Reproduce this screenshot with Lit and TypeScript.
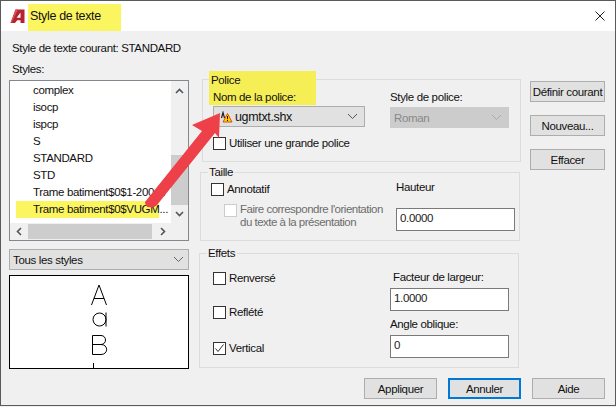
import { LitElement, html, css, svg } from "lit";
import { customElement } from "lit/decorators.js";

const chev = (c: string) => html`<svg class="chev" width="11" height="7" viewBox="0 0 11 7"><path d="M1 1l4.500 4.500L10 1" fill="none" stroke="${c}" stroke-width="1"/></svg>`;

@customElement("app-root")
export class AppRoot extends LitElement {
  static styles = css`
    :host { display: block; width: 616px; height: 407px; overflow: hidden; background: #f0f0f0;
      font-family: "Liberation Sans", Arial, sans-serif; font-size: 11.5px; letter-spacing: -.35px; color: #111; line-height: 14px; }
    * { box-sizing: border-box; }
    .win { position: relative; width: 616px; height: 406px; border: 1px solid #5a5a5a; display: flex; flex-direction: column; }
    .title { height: 30px; background: #fff; display: flex; align-items: stretch; padding-left: 9px; flex: none; }
    .logo { margin-top: 7px; flex: none; }
    .ttl { margin: 3px 0 0 3px; width: 93px; height: 27px; background: #fbf55f; font-size: 12.5px; line-height: 25px; padding-left: 2px; color: #111; }
    .close { margin: 10px 10px 0 auto; }
    .main { flex: 1; display: grid; grid-template-columns: 180px 341px 75px; padding-left: 8px; }
    .left { display: flex; flex-direction: column; padding-top: 10px; }
    .cur { height: 14px; padding-left: 3px; white-space: nowrap; }
    .lab { height: 14px; margin-top: 7px; padding-left: 3px; }
    .list { margin-top: 4px; width: 180px; height: 161px; background: #fff; border: 1px solid #828790; display: grid;
      grid-template-columns: 1fr 17px; grid-template-rows: 1fr 17px; }
    .items { padding: 1px 0 0 6px; }
    .it { height: 17px; line-height: 17px; padding-left: 17px; white-space: nowrap; width: 155px; }
    .it.sel { background: linear-gradient(90deg, #fbf55f 143px, transparent 143px); }
    .vs { background: #f0f0f0; display: flex; flex-direction: column; align-items: center; justify-content: space-between; padding: 7px 0 6px; position: relative; }
    .vthumb { position: absolute; left: 0; right: 0; top: 74px; height: 50px; background: #cdcdcd; }
    .hs { background: #f0f0f0; display: flex; align-items: center; padding-left: 6px; grid-column: 1 / 3; }
    .hthumb { flex: none; width: 124px; height: 15px; background: #cdcdcd; margin: 0 8px 0 6px; }
    .combo { margin-top: 8px; width: 180px; height: 21px; background: #e1e1e1; border: 1px solid #adadad; display: flex; align-items: center; justify-content: space-between; padding: 0 4px 0 3px; }
    .preview { margin-top: 5px; width: 180px; height: 94px; background: #fff; border: 1px solid #000; }
    .preview svg { display: block; }
    .mid { display: flex; flex-direction: column; padding-left: 11px; }
    .grp { border: 1px solid #dcdcdc; position: relative; }
    .legend { position: absolute; left: 7px; top: -8px; background: #f0f0f0; padding: 0 2px 0 1px; }
    .police { margin-top: 48px; margin-left: 2px; width: 319px; height: 83px; padding-left: 10px; display: flex; flex: none; }
    .pol-hl { position: absolute; left: 6px; top: -9px; width: 107px; height: 34px; background: #f6ee55; padding: 2px 0 0 2px; }
    .pol-hl div + div { margin: 3px 0 0 2px; }
    .fontcol { width: 177px; padding-top: 26px; }
    .stylecol { padding-top: 10px; }
    .cb-select { height: 21px; display: flex; align-items: center; justify-content: space-between; border: 1px solid #adadad; background: #e1e1e1; padding: 0 6px 0 3px; }
    .fontsel { width: 152px; font-size: 12.5px; padding-left: 5px; }
    .stylesel { width: 119px; margin-top: 3px; background: #ccc; border-color: #ccc; color: #888; }
    .warn { margin-right: 2px; flex: none; }
    .fn { flex: 1; }
    .check { display: flex; align-items: center; gap: 3px; height: 14px; white-space: nowrap; }
    .box { width: 13px; height: 13px; border: 1px solid #333; background: #fff; flex: none; display: block; }
    .box.off { border-color: #ccc; margin-top: 1px; }
    .taille { margin-top: 10px; width: 320px; height: 69px; padding: 9px 0 0 10px; display: flex; flex: none; }
    .tl { width: 185px; }
    .sub { display: flex; gap: 3px; margin-top: 7px; padding-left: 13px; color: #6d6d6d; line-height: 13px; white-space: nowrap; letter-spacing: -.5px; }
    .tr { margin-top: -2px; }
    .input { height: 23px; border: 1px solid #7a7a7a; background: #fff; padding: 2px 0 0 3px; color: #222; }
    .tr .input { width: 119px; margin-top: 14px; }
    .effets { margin-top: 12px; width: 320px; height: 115px; margin-left: -1px; padding: 17px 0 0 13px; display: flex; flex: none; }
    .el { width: 177px; display: flex; flex-direction: column; gap: 20px; }
    .el .check:last-child { margin-top: 2px; }
    .er { margin-top: -1px; }
    .er .l1 { padding-left: 3px; height: 14px; }
    .er .input { width: 119px; margin-top: 4px; }
    .er .l2 { margin-top: 6px; height: 14px; }
    .right { display: flex; flex-direction: column; gap: 13px; padding-top: 50px; }
    .btn { width: 75px; height: 21px; border: 1px solid #adadad; background: #e1e1e1; display: flex; align-items: center; justify-content: center; white-space: nowrap; color: #111; }
    .bottom { flex: none; display: flex; justify-content: flex-end; gap: 11px; padding: 1px 10px 0 0; height: 28px; }
    .bottom .btn { width: 73px; }
    .bottom .btn.def { border: 2px solid #0078d7; }
    .arrow { position: absolute; left: -1px; top: -1px; pointer-events: none; }
  `;

  render() {
    const items = ["complex", "isocp", "ispcp", "S", "STANDARD", "STD", "Trame batiment$0$1-200 ..."];
    return html`<div class="win">
      <div class="title">
        <svg class="logo" width="15" height="16" viewBox="0 0 15 16"><path d="M5.500 1.500H14.500V15H10.500V12.300H7.200L5 15H.5z" fill="#b5232f"/><path d="M5.500 1.500H8L1.500 15H.5z" fill="#d8525a"/><path d="M10.500 4.500V9.700H6.700z" fill="#fff"/></svg>
        <div class="ttl">Style de texte</div>
        <svg class="close" width="10" height="10" viewBox="0 0 10 10"><path d="M.5.500l9 9M9.500.500l-9 9" stroke="#222" stroke-width="1" fill="none"/></svg>
      </div>
      <div class="main">
        <div class="left">
          <div class="cur">Style de texte courant: STANDARD</div>
          <div class="lab">Styles:</div>
          <div class="list">
            <div class="items">
              ${items.map((t) => html`<div class="it">${t}</div>`)}
              <div class="it sel">Trame batiment$0$VUGM...</div>
            </div>
            <div class="vs">
              <div class="vthumb"></div>
              <svg width="9" height="6" viewBox="0 0 9 6"><path d="M1 5l3.500-3.500L8 5" fill="none" stroke="#555" stroke-width="1.600"/></svg>
              <svg width="9" height="6" viewBox="0 0 9 6"><path d="M1 1l3.500 3.500L8 1" fill="none" stroke="#555" stroke-width="1.600"/></svg>
            </div>
            <div class="hs">
              <svg width="6" height="9" viewBox="0 0 6 9"><path d="M5 1 1.500 4.500 5 8" fill="none" stroke="#555" stroke-width="1.600"/></svg>
              <div class="hthumb"></div>
              <svg width="6" height="9" viewBox="0 0 6 9"><path d="M1 1l3.500 3.500L1 8" fill="none" stroke="#555" stroke-width="1.600"/></svg>
            </div>
          </div>
          <div class="combo"><span>Tous les styles</span>${chev("#666")}</div>
          <div class="preview">
            <svg width="178" height="92" viewBox="0 0 178 92">
              ${svg`<g fill="none" stroke="#000" stroke-width="1"><path d="M81.500 29 89 9l7.500 20M84 22.500h10"/><circle cx="89.500" cy="43.500" r="6.500"/><path d="M96 36.500v14"/><path d="M82.500 59.500v19h8.500c7.500 0 7.500-10 0-10h-8.500M82.500 59.500h8.500c6 0 6 9 0 9"/><path d="M83.500 87v5"/></g>`}
            </svg>
          </div>
        </div>
        <div class="mid">
          <div class="grp police">
            <div class="pol-hl"><div>Police</div><div>Nom de la police:</div></div>
            <div class="fontcol">
              <div class="cb-select fontsel">
                <svg class="warn" width="14" height="12" viewBox="0 0 14 12"><path d="M2.500 7 4 1.500 5.500 7" fill="none" stroke="#222" stroke-width="1.200"/><path d="M8.500 2.500 13 11H4z" fill="#fc0" stroke="#c41" stroke-width=".9"/><path d="M8.500 5v3.200M8.500 9v1" stroke="#500" stroke-width="1"/></svg>
                <span class="fn">ugmtxt.shx</span>${chev("#555")}
              </div>
              <div class="check" style="margin-top:9px"><span class="box"></span>Utiliser une grande police</div>
            </div>
            <div class="stylecol">
              Style de police:
              <div class="cb-select stylesel"><span>Roman</span>${chev("#aaa")}</div>
            </div>
          </div>
          <div class="grp taille">
            <div class="legend">Taille</div>
            <div class="tl">
              <div class="check"><span class="box"></span>Annotatif</div>
              <div class="sub"><span class="box off"></span><span>Faire correspondre l'orientation<br />du texte à la présentation</span></div>
            </div>
            <div class="tr">Hauteur<div class="input">0.0000</div></div>
          </div>
          <div class="grp effets">
            <div class="legend">Effets</div>
            <div class="el">
              <div class="check"><span class="box"></span>Renversé</div>
              <div class="check"><span class="box"></span>Reflété</div>
              <div class="check">
                <svg class="box" width="13" height="13" viewBox="0 0 11 11"><path d="M1.500 5.500 4 8.500l5.500-7" fill="none" stroke="#333" stroke-width="1"/></svg>Vertical
              </div>
            </div>
            <div class="er">
              <div class="l1">Facteur de largeur:</div>
              <div class="input">1.0000</div>
              <div class="l2">Angle oblique:</div>
              <div class="input">0</div>
            </div>
          </div>
        </div>
        <div class="right">
          <div class="btn">Définir courant</div>
          <div class="btn">Nouveau...</div>
          <div class="btn">Effacer</div>
        </div>
      </div>
      <div class="bottom">
        <div class="btn">Appliquer</div>
        <div class="btn def">Annuler</div>
        <div class="btn">Aide</div>
      </div>
      <svg class="arrow" width="616" height="407" viewBox="0 0 616 407">
        <path d="M220 113 192 125l10 6-57 71c0 3 2 5 4 5 3 1 6 0 8-2l58-72 4 5z" fill="#ee4048"/>
      </svg>
    </div>`;
  }
}
